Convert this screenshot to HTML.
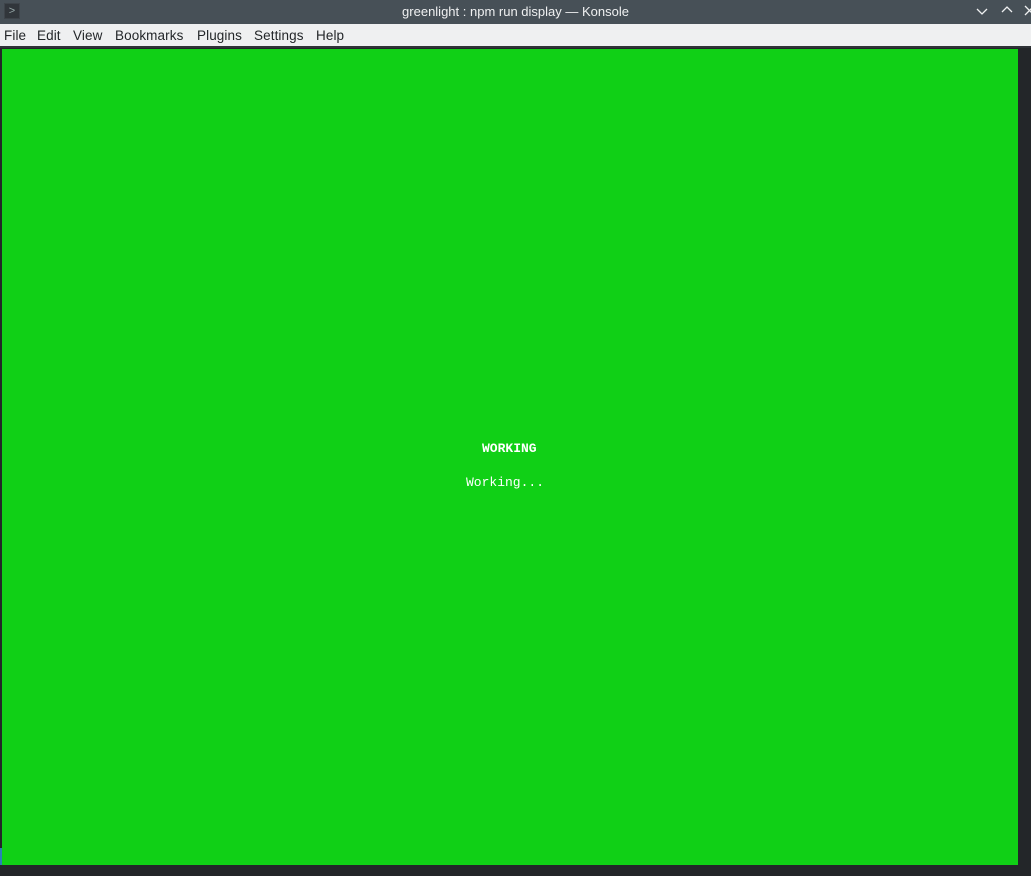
<!DOCTYPE html>
<html><head><meta charset="utf-8"><style>
html,body{margin:0;padding:0;width:1031px;height:876px;overflow:hidden;background:#232629;position:relative;font-family:"Liberation Sans","DejaVu Sans",sans-serif}
#title{position:absolute;left:0;top:0;width:1031px;height:24px;background:#475057;color:#eff0f1;font-size:13px;text-align:center;line-height:24px}
#icon{position:absolute;left:4px;top:3px;width:16px;height:16px;background:#31363b;border:1px solid #3e444a;box-sizing:border-box;color:#9aa;font-size:11px;line-height:14px;text-align:center}
#menu{position:absolute;left:0;top:24px;width:1031px;height:22px;background:#eff0f1;font-size:13.5px;color:#232629;letter-spacing:0.1px}
#menu span{position:absolute;top:4px}
#sep{position:absolute;left:0;top:46px;width:1031px;height:2px;background:#2f3337}
#term{position:absolute;left:2px;top:49px;width:1016px;height:816px;background:#10d016}
#blue{position:absolute;left:0;top:848px;width:2px;height:17px;background:#2980b9}
.t{position:absolute;font-family:"Liberation Mono","DejaVu Sans Mono",monospace;font-size:13px;color:#fff;white-space:pre}
#rs{position:absolute;left:1029px;top:49px;width:2px;height:816px;background:#31363b}
</style></head><body>
<div id="title"><div id="icon">&gt;</div>greenlight : npm run display — Konsole
<svg style="position:absolute;left:976px;top:6px" width="12" height="10"><path d="M1 3 L6 8 L11 3" stroke="#eff0f1" stroke-width="1.3" fill="none"/></svg>
<svg style="position:absolute;left:1001px;top:5px" width="12" height="10"><path d="M1 7 L6 2 L11 7" stroke="#eff0f1" stroke-width="1.3" fill="none"/></svg>
<svg style="position:absolute;left:1024px;top:5px" width="10" height="12"><path d="M1 1 L10 10 M10 1 L1 10" stroke="#eff0f1" stroke-width="1.3" fill="none"/></svg>
</div>
<div id="menu">
<span style="left:4px">File</span><span style="left:37px">Edit</span><span style="left:73px">View</span><span style="left:115px">Bookmarks</span><span style="left:197px">Plugins</span><span style="left:254px">Settings</span><span style="left:316px">Help</span>
</div>
<div id="sep"></div>
<div id="term"></div>
<div id="blue"></div>
<div class="t" style="left:482px;top:441px;font-weight:bold">WORKING</div>
<div class="t" style="left:466px;top:475px">Working...</div>
</body></html>
